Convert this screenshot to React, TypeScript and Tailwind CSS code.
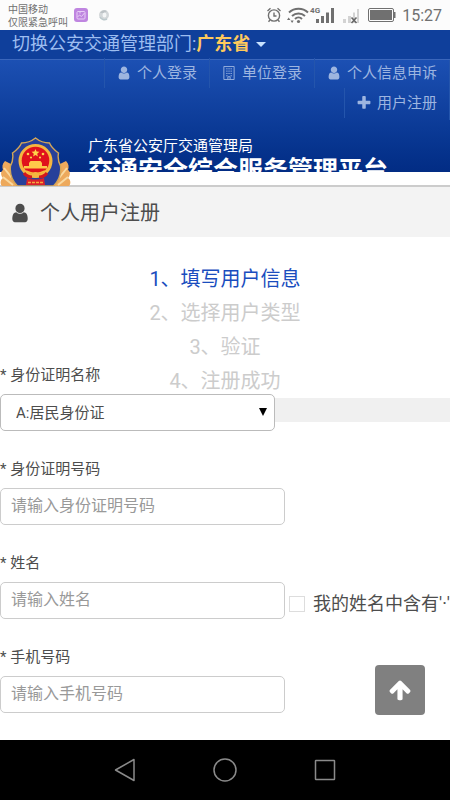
import type { ReactNode } from "react";

const navLinks = [
  { id: "login", label: "个人登录", icon: <UserIcon className="size-3.5" /> },
  { id: "company", label: "单位登录", icon: <BuildingIcon /> },
  { id: "appeal", label: "个人信息申诉", icon: <UserIcon className="size-3.5" /> },
  { id: "register", label: "用户注册", icon: <PlusIcon /> },
];

const steps = [
  { id: 1, text: "1、填写用户信息", active: true },
  { id: 2, text: "2、选择用户类型", active: false },
  { id: 3, text: "3、验证", active: false },
  { id: 4, text: "4、注册成功", active: false },
];

function UserIcon({ className }: { className: string }) {
  return (
    <svg viewBox="192 64 1408 1664" fill="currentColor" className={className} aria-hidden="true">
      <path d="M1536 1399q0 109-62.5 187t-150.5 78h-854q-88 0-150.5-78t-62.5-187q0-85 8.5-160.5t31.5-152 58.5-131 94-89 134.5-34.5q131 128 313 128t313-128q76 0 134.5 34.5t94 89 58.5 131 31.5 152 8.5 160.5zm-256-887q0 159-112.5 271.5t-271.5 112.5-271.5-112.5-112.5-271.5 112.5-271.5 271.5-112.5 271.5 112.5 112.5 271.5z" />
    </svg>
  );
}

function BuildingIcon() {
  return (
    <svg viewBox="1 1 14 15" fill="none" stroke="currentColor" className="size-3.5" aria-hidden="true">
      <path d="M2.5 1.500h11v14h-11z" />
      <path d="M5 4h1.500M7.300 4h1.500M9.600 4h1.500M5 6.500h1.500M7.300 6.500h1.500M9.600 6.500h1.500M5 9h1.500M7.300 9h1.500M9.600 9h1.500M5 11.500h1.500M9.600 11.500h1.500M6.800 15.500v-3h2.400v3" />
    </svg>
  );
}

function PlusIcon() {
  return (
    <svg viewBox="128 128 1536 1536" fill="currentColor" className="size-3.5" aria-hidden="true">
      <path d="M1600 736v192q0 40-28 68t-68 28h-416v416q0 40-28 68t-68 28h-192q-40 0-68-28t-28-68v-416h-416q-40 0-68-28t-28-68v-192q0-40 28-68t68-28h416v-416q0-40 28-68t68-28h192q40 0 68 28t28 68v416h416q40 0 68 28t28 68z" />
    </svg>
  );
}

function StatusBar() {
  return (
    <div className="flex h-[30px] items-center justify-between bg-[#fcfcfc] px-2 text-[#707070]">
      <div className="flex items-center">
        <div className="pt-0.5 text-[10px] leading-[13px]">
          <p>中国移动</p>
          <p>仅限紧急呼叫</p>
        </div>
        <svg viewBox="0 0 14 14" className="ml-1.5 size-3.5" aria-hidden="true">
          <rect width="14" height="14" rx="3" fill="#bf85e0" />
          <rect x="3" y="3.500" width="8" height="7.500" rx="1" fill="none" stroke="#e8cdf6" />
          <path d="M3.500 9l2-2 2 1.500L10.500 5M6 3.500v2" stroke="#e8cdf6" fill="none" />
        </svg>
        <svg viewBox="0 0 12 12" className="ml-2.5 size-3" aria-hidden="true">
          <circle cx="6" cy="6" r="5" fill="#d3d7d9" />
          <path d="M2 4a5 5 0 0 1 7-2L6 4z" fill="#bcc2c5" />
          <path d="M2 8a5 5 0 0 0 7 2" stroke="#bcc9cc" strokeWidth="1.500" fill="none" />
          <ellipse cx="6.500" cy="6" rx="2" ry="2.500" fill="#f4f6f6" />
        </svg>
      </div>
      <div className="flex items-center">
        <svg viewBox="0 0 16 16" fill="none" stroke="currentColor" strokeWidth="1.400" className="size-4" aria-hidden="true">
          <circle cx="8" cy="8.500" r="5.600" />
          <path d="M8 5.500V9h2.500M1.500 4l3-2.700M14.500 4l-3-2.700M4 13l-1.500 1.800M12 13l1.500 1.800" />
        </svg>
        <svg viewBox="0 0 24 18" fill="none" stroke="currentColor" strokeWidth="2" className="ml-1 h-[18px] w-6" aria-hidden="true">
          <path d="M3 6.500a14 14 0 0 1 19 0M6 10a9.500 9.500 0 0 1 13 0M9 13a5 5 0 0 1 7 0" />
          <circle cx="12.500" cy="15.500" r="1.600" fill="currentColor" stroke="none" />
          <path d="M1 14l1.700-2.500L4.400 14zM4.500 14.500l1.600 2.500 1.600-2.500z" fill="currentColor" stroke="none" />
        </svg>
        <div className="flex items-start">
          <span className="text-[8px] leading-[10px] font-bold">4G</span>
          <svg viewBox="0 0 18 18" fill="currentColor" className="-ml-1 h-[18px] w-[18px]" aria-hidden="true">
            <path d="M0 13h3v4H0zM5 10h3v7H5zM10 6.500h3V17h-3zM15 2h3v15h-3z" />
          </svg>
        </div>
        <svg viewBox="0 0 18 18" className="ml-2 h-[18px] w-[18px]" aria-hidden="true">
          <path d="M1 13h3v4H1zM6 10h3v7H6zM11 6.500h2V17h-2zM15 3h2v14h-2z" fill="#d3d3d3" />
          <path d="M9.500 11.500l5 5.500m0-5.500l-5 5.500" stroke="#666" strokeWidth="1.600" />
        </svg>
        <svg viewBox="0 0 28 14" className="ml-2 h-3.5 w-7" aria-hidden="true">
          <rect x="0.500" y="0.500" width="25" height="13" rx="1.500" fill="none" stroke="#707070" />
          <rect x="2" y="2" width="22" height="10" fill="#707070" />
          <path d="M26 4h1.500v6H26z" fill="#707070" />
        </svg>
        <time className="ml-1.5 pt-0.5 text-base leading-5">15:27</time>
      </div>
    </div>
  );
}

function Emblem() {
  return (
    <svg viewBox="0 0 72 49" className="h-[49px] w-[72px] shrink-0" role="img" aria-label="警徽">
      <path d="M5 24C2 27 2 30 3 33c-3 2-2 6 0 8-3 2-3 6-1 8h20L11 27zM66 24c3 3 3 6 2 9 3 2 2 6 0 8 3 2 3 6 1 8H49l11-22z" fill="#eda95c" />
      <path d="M4 31l8 10M3 40l10 8M67 31l-8 10M68 40l-10 8" stroke="#f9d9a0" strokeWidth="2" />
      <path d="M35.500 1c5 4 9 5 14 5 2 5 5 7 9 10-1 5 0 9 2 13 1 8-2 15-7 20h-36c-5-5-8-12-7-20 2-4 3-8 2-13 4-3 7-5 9-10 5 0 9-1 14-5z" fill="#27409a" stroke="#d2a558" strokeWidth="1.400" />
      <circle cx="35.500" cy="24" r="17" fill="#f5b640" />
      <circle cx="35.500" cy="23.500" r="13.800" fill="#e0121c" />
      <path d="M35.500 12l1.100 2.600 2.800.2-2.200 1.900.7 2.700-2.400-1.400-2.400 1.400.7-2.700-2.200-1.900 2.800-.2z" fill="#ffd54a" />
      <circle cx="28" cy="17" r="1.300" fill="#ffd54a" />
      <circle cx="43" cy="17" r="1.300" fill="#ffd54a" />
      <circle cx="31" cy="20.500" r="1.100" fill="#ffd54a" />
      <circle cx="40" cy="20.500" r="1.100" fill="#ffd54a" />
      <path d="M29 26l1.500-2h10l1.500 2v3h5v2.500H24V29h5z" fill="#ffc94a" />
      <path d="M26 34q9.500 5 19 0" stroke="#f6b93b" strokeWidth="1.500" fill="none" />
      <path d="M24 36q3 4 8 4M47 36q-3 4-8 4" stroke="#d4161c" strokeWidth="3" fill="none" />
      <circle cx="35.500" cy="38" r="3" fill="#f5b640" />
      <path d="M27 41q8.500 3 17 0l1 7H26z" fill="#d9202a" />
      <path d="M28 45.500h15" stroke="#f6a83b" strokeWidth="1.500" strokeDasharray="3 1" />
    </svg>
  );
}

function SiteHeader() {
  return (
    <header className="border-b-2 border-[#cccccc] pb-[13px]">
      <div className="flex h-[30px] items-start border-b border-[#3a66bb] bg-[#0f3f9b] px-3 text-lg leading-7 text-[#9dbdf0]">
        <span>切换公安交通管理部门:</span>
        <button type="button" className="flex items-center gap-1.5 font-bold text-[#ffc95c]">
          广东省
          <svg viewBox="0 0 10 5" className="h-[5px] w-2.5" aria-hidden="true">
            <path d="M0 0h10L5 5z" fill="#c8e2ff" />
          </svg>
        </button>
      </div>
      <div className="h-28 bg-linear-to-b from-[#1c50b3] to-[#022c84]">
        <nav className="flex flex-wrap justify-end border-r border-[#2455ac] text-[15px] leading-[30px] text-[#9db5e0]">
          {navLinks.map((link) => (
            <a
              key={link.id}
              href={`#${link.id}`}
              className="-mt-0.5 mb-0.5 flex items-center gap-1.5 border-l border-[#2455ac] px-3 whitespace-nowrap"
            >
              {link.icon}
              {link.label}
            </a>
          ))}
        </nav>
        <div className="flex items-start gap-4 pt-[17px] text-white">
          <Emblem />
          <div className="h-[35px] overflow-hidden whitespace-nowrap">
            <p className="text-[15px] leading-[18px]">广东省公安厅交通管理局</p>
            <h1 className="text-[25px] leading-8 font-bold">交通安全综合服务管理平台</h1>
          </div>
        </div>
      </div>
    </header>
  );
}

function Field({ id, label, children }: { id: string; label: string; children: ReactNode }) {
  return (
    <div className="flex flex-col gap-[7px]">
      <label htmlFor={id} className="self-start text-[15px] leading-6">
        * {label}
      </label>
      {children}
    </div>
  );
}

function TextInput({ id, placeholder }: { id: string; placeholder: string }) {
  return (
    <input
      id={id}
      type="text"
      placeholder={placeholder}
      className="h-[37px] w-[285px] shrink-0 rounded-[5px] border border-[#cccccc] bg-white px-2.5 pb-0.5 text-base placeholder:text-[#999999]"
    />
  );
}

export default function App() {
  return (
    <div className="flex min-h-screen flex-col overflow-x-hidden bg-white font-[Roboto,'Noto_Sans_CJK_SC',sans-serif] text-[#4d4d4d]">
      <StatusBar />
      <SiteHeader />
      <main className="relative flex-1 pb-6">
        <h2 className="flex h-[50px] items-center gap-2.5 bg-[#f3f3f3] px-2.5 pt-0.5 text-xl">
          <UserIcon className="size-5" />
          个人用户注册
        </h2>

        <ol className="pt-[25px] text-center text-xl leading-[34px]">
          {steps.map((step) => (
            <li key={step.id} className={step.active ? "text-[#1a4dbe]" : "text-[#cccccc]"}>
              {step.text}
            </li>
          ))}
        </ol>
        <div className="h-6 bg-[#f0f0f0]" />

        <form className="relative -mt-[59px] flex flex-col gap-[26px]">
          <Field id="id-type" label="身份证明名称">
            <div className="relative w-[275px]">
              <select
                id="id-type"
                className="h-[37px] w-full appearance-none rounded-[5px] border border-[#bbbbbb] bg-white px-[15px] pt-0.5 text-[15px]"
              >
                <option>A:居民身份证</option>
              </select>
              <svg viewBox="0 0 8 8" className="pointer-events-none absolute top-3.5 right-2 size-2" aria-hidden="true">
                <path d="M0 0h8L4 8z" fill="#000" />
              </svg>
            </div>
          </Field>
          <Field id="id-number" label="身份证明号码">
            <TextInput id="id-number" placeholder="请输入身份证明号码" />
          </Field>
          <Field id="name" label="姓名">
            <div className="flex items-center gap-1">
              <TextInput id="name" placeholder="请输入姓名" />
              <label className="mt-1.5 flex items-center gap-2 text-lg leading-6 whitespace-nowrap">
                <input type="checkbox" className="size-4 shrink-0 appearance-none border border-[#dddddd] bg-white" />
                我的姓名中含有'·'
              </label>
            </div>
          </Field>
          <Field id="phone" label="手机号码">
            <TextInput id="phone" placeholder="请输入手机号码" />
          </Field>
        </form>

        <button
          type="button"
          aria-label="返回顶部"
          className="absolute right-[25px] bottom-[25px] flex size-[50px] items-center justify-center rounded bg-[#808080] text-white"
        >
          <svg viewBox="0 0 1792 1792" fill="currentColor" className="size-6" aria-hidden="true">
            <path d="M1675 971q0 51-37 90l-75 75q-38 38-91 38-54 0-90-38l-294-293v704q0 52-37.500 84.500t-90.500 32.500h-128q-53 0-90.500-32.500t-37.500-84.500v-704l-294 293q-36 38-90 38t-90-38l-75-75q-38-38-38-90 0-53 38-91l651-651q35-37 90-37 54 0 91 37l651 651q37 39 37 91z" />
          </svg>
        </button>
      </main>

      <footer className="flex h-[60px] items-center justify-center gap-[76px] bg-black text-[#8a8a8a]">
        <button type="button" aria-label="返回">
          <svg viewBox="0 0 24 24" fill="none" stroke="currentColor" strokeWidth="1.500" className="size-6" aria-hidden="true">
            <path d="M21 1.500v21L2.500 12z" strokeLinejoin="round" />
          </svg>
        </button>
        <button type="button" aria-label="主页">
          <svg viewBox="0 0 24 24" fill="none" stroke="currentColor" strokeWidth="1.500" className="size-6" aria-hidden="true">
            <circle cx="12" cy="12" r="11" />
          </svg>
        </button>
        <button type="button" aria-label="最近任务">
          <svg viewBox="0 0 24 24" fill="none" stroke="currentColor" strokeWidth="1.500" className="size-6" aria-hidden="true">
            <rect x="2.500" y="2.500" width="19" height="19" rx="0.500" />
          </svg>
        </button>
      </footer>
    </div>
  );
}
